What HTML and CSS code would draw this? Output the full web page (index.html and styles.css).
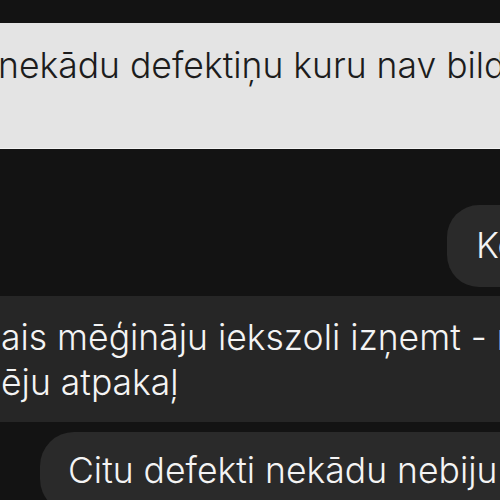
FILE: index.html
```html
<!DOCTYPE html>
<html lang="lv">
<head>
    <meta charset="UTF-8">
    <meta name="viewport" content="width=device-width, initial-scale=1.0">
    <title>Saruna</title>
    <link rel="stylesheet" href="styles.css">
</head>
<body>
    <div class="chat">
        <div class="quote">nekādu defektiņu kuru nav bildē</div>
        <div class="bubble mine short">Ko</div>
        <div class="bubble theirs">ais mēģināju iekszoli izņemt - n<br>ēju atpakaļ</div>
        <div class="bubble mine long">Citu defekti nekādu nebiju</div>
    </div>
</body>
</html>
```
FILE: styles.css
```css
/* Chat reset */
body, html {
    margin: 0;
    padding: 0;
    height: 100%;
    background: #131313;
    overflow: hidden;
    font-family: 'Inter Light', 'Inter', 'Noto Sans', sans-serif;
    font-weight: 300;
}

.chat {
    display: flex;
    flex-direction: column;
    align-items: flex-start;
    padding-top: 23px;
}

.quote {
    align-self: stretch;
    height: 126px;
    box-sizing: border-box;
    padding: 20px 0 0 0;
    margin-left: -2px;
    background: #e4e4e4;
    border-bottom: 1px solid #f2f2f2;
    color: #1c1c1c;
    font-size: 35.5px;
    line-height: 45px;
    white-space: nowrap;
}

.bubble {
    color: #f4f4f4;
    font-size: 35.5px;
    line-height: 45px;
    white-space: nowrap;
    box-sizing: border-box;
}

.short {
    margin-top: 56px;
    margin-left: 447px;
    padding: 18px 40px 19px 29px;
    border-radius: 32px;
    background: #2a2a2a;
}

.theirs {
    align-self: stretch;
    margin-top: 9px;
    padding: 19px 0 17px 1px;
    background: #262626;
}

.long {
    margin-top: 10px;
    margin-left: 40px;
    padding: 16px 60px 20px 28px;
    border-radius: 34px;
    background: #2a2a2a;
}
```
